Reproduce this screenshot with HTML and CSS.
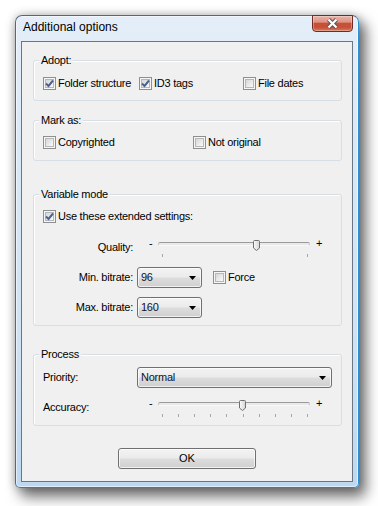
FILE: index.html
```html
<!DOCTYPE html>
<html>
<head>
<meta charset="utf-8">
<link rel="stylesheet" href="styles.css">
</head>
<body>
<div class="window">
  <div class="titlebar">
    <span class="title">Additional options</span>
    <div class="close">
      <svg width="13" height="11" viewBox="0 0 13 11"><path d="M2.5 1.5 L10.5 9.5 M10.5 1.5 L2.5 9.5" stroke="#5e5250" stroke-width="4.2" fill="none"/><path d="M2.5 1.5 L10.5 9.5 M10.5 1.5 L2.5 9.5" stroke="#fff" stroke-width="2.2" fill="none"/></svg>
    </div>
  </div>
  <div class="client">
    <div class="group g-adopt">
      <div class="gtitle">Adopt:</div>
      <div class="row adopt-row">
        <label class="check"><span class="cb on"><svg width="11" height="11" viewBox="0 0 11 11"><path d="M2 5.5 L4.5 8 L9 2.5" stroke="#4b6390" stroke-width="2" fill="none"/></svg></span>Folder structure</label>
        <label class="check"><span class="cb on"><svg width="11" height="11" viewBox="0 0 11 11"><path d="M2 5.5 L4.5 8 L9 2.5" stroke="#4b6390" stroke-width="2" fill="none"/></svg></span>ID3 tags</label>
        <label class="check"><span class="cb"></span>File dates</label>
      </div>
    </div>

    <div class="group g-mark">
      <div class="gtitle">Mark as:</div>
      <div class="row mark-row">
        <label class="check"><span class="cb"></span>Copyrighted</label>
        <label class="check"><span class="cb"></span>Not original</label>
      </div>
    </div>

    <div class="group g-var">
      <div class="gtitle">Variable mode</div>
      <div class="row r-ext">
        <label class="check"><span class="cb on"><svg width="11" height="11" viewBox="0 0 11 11"><path d="M2 5.5 L4.5 8 L9 2.5" stroke="#4b6390" stroke-width="2" fill="none"/></svg></span>Use these extended settings:</label>
      </div>
      <div class="frow r-quality">
        <span class="flabel right top">Quality:</span>
        <div class="slider">
          <div class="srow">
            <span class="pm minus">-</span>
            <div class="track">
              <div class="thumb" style="left:94px"><svg width="7" height="11" viewBox="0 0 7 11"><defs><linearGradient id="tg1" x1="0" y1="0" x2="1" y2="0"><stop offset="0" stop-color="#fafafa"/><stop offset="1" stop-color="#d4d4d4"/></linearGradient></defs><path d="M0.5 1.5 Q0.5 0.5 1.5 0.5 H5.5 Q6.5 0.5 6.5 1.5 V8 L3.5 10.5 L0.5 8 Z" fill="url(#tg1)" stroke="#707070"/></svg></div>
            </div>
            <span class="pm plus">+</span>
          </div>
          <div class="ticks"><i></i><i></i></div>
        </div>
      </div>
      <div class="frow r-min">
        <span class="flabel right">Min. bitrate:</span>
        <div class="select small"><span class="val">96</span><svg width="7" height="4" viewBox="0 0 7 4"><path d="M0 0 H7 L3.5 4 Z" fill="#000"/></svg></div>
        <label class="check force"><span class="cb"></span>Force</label>
      </div>
      <div class="frow r-max">
        <span class="flabel right">Max. bitrate:</span>
        <div class="select small"><span class="val">160</span><svg width="7" height="4" viewBox="0 0 7 4"><path d="M0 0 H7 L3.5 4 Z" fill="#000"/></svg></div>
      </div>
    </div>

    <div class="group g-proc">
      <div class="gtitle">Process</div>
      <div class="frow r-prio">
        <span class="flabel">Priority:</span>
        <div class="select wide"><span class="val">Normal</span><svg width="7" height="4" viewBox="0 0 7 4"><path d="M0 0 H7 L3.5 4 Z" fill="#000"/></svg></div>
      </div>
      <div class="frow r-acc">
        <span class="flabel top">Accuracy:</span>
        <div class="slider">
          <div class="srow">
            <span class="pm minus">-</span>
            <div class="track">
              <div class="thumb" style="left:80px"><svg width="7" height="11" viewBox="0 0 7 11"><defs><linearGradient id="tg2" x1="0" y1="0" x2="1" y2="0"><stop offset="0" stop-color="#fafafa"/><stop offset="1" stop-color="#d4d4d4"/></linearGradient></defs><path d="M0.5 1.5 Q0.5 0.5 1.5 0.5 H5.5 Q6.5 0.5 6.5 1.5 V8 L3.5 10.5 L0.5 8 Z" fill="url(#tg2)" stroke="#707070"/></svg></div>
            </div>
            <span class="pm plus">+</span>
          </div>
          <div class="ticks"><i></i><i></i><i></i><i></i><i></i><i></i><i></i><i></i><i></i><i></i></div>
        </div>
      </div>
    </div>

    <div class="btn">OK</div>
  </div>
</div>
</body>
</html>
```
FILE: styles.css
```css
html, body {
  margin: 0;
  padding: 0;
  background: #ffffff;
}
body {
  font-family: "Liberation Sans", Arial, sans-serif;
  font-size: 11px;
  letter-spacing: -0.25px;
  color: #000;
  height: 506px;
  overflow: hidden;
}
.window {
  margin: 15px 0 0 15px;
  width: 344px;
  height: 473px;
  box-sizing: border-box;
  border: 1px solid #56687c;
  border-right-color: #2e8fd0;
  border-bottom-color: #2e7fc0;
  border-radius: 7px 7px 5px 5px;
  background: linear-gradient(180deg, #e4eef9 0%, #d9e8f6 30%, #cfe2f4 70%, #bdd8f0 100%);
  padding: 0 5px 5px;
  box-shadow: 6px 8px 14px 1px rgba(0,0,0,0.55), 0 0 10px rgba(0,0,0,0.25), inset 0 0 0 1px rgba(255,255,255,0.55);
  display: flex;
  flex-direction: column;
}
.titlebar {
  height: 25px;
  display: flex;
  align-items: flex-start;
}
.title {
  margin: 4px 0 0 2px;
  font-size: 12px;
  line-height: 15px;
  letter-spacing: 0;
  color: #000;
}
.close {
  margin: -1px 0 0 auto;
  width: 41px;
  height: 17px;
  box-sizing: border-box;
  border: 1px solid #6e2d24;
  border-radius: 0 0 4px 4px;
  background: linear-gradient(180deg, #eab3a8 0%, #de9484 40%, #c8503a 50%, #c65036 75%, #d97a60 100%);
  box-shadow: inset 0 0 0 1px rgba(255,255,255,0.3);
  display: flex;
  align-items: center;
  justify-content: center;
}
.client {
  height: 441px;
  box-sizing: border-box;
  border: 1px solid #6a7684;
  background: #f0f0f0;
  display: flex;
  flex-direction: column;
}
.group {
  margin: 0 10px 0 11px;
  border: 1px solid #d5dfe5;
  border-radius: 3px;
  padding: 0 9px;
  display: flex;
  flex-direction: column;
  box-shadow: inset 1px 1px 0 #fff;
}
.gtitle {
  align-self: flex-start;
  margin: -7px 0 0 -4px;
  padding: 0 2px;
  background: #f0f0f0;
  line-height: 13px;
}
.g-adopt { margin-top: 18px; padding-bottom: 10px; }
.g-mark { margin-top: 19px; padding-bottom: 11px; }
.g-var { margin-top: 33px; padding-bottom: 7px; }
.g-proc { margin-top: 28px; padding-bottom: 8px; }

.row {
  display: grid;
  height: 13px;
}
.adopt-row { margin-top: 10px; grid-template-columns: 96px 104px auto; }
.mark-row { margin-top: 9px; grid-template-columns: 150px auto; }
.r-ext { margin-top: 9px; }

.check {
  display: flex;
  align-items: center;
  gap: 2px;
  line-height: 13px;
  white-space: nowrap;
}
.cb {
  width: 13px;
  height: 13px;
  box-sizing: border-box;
  border: 1px solid #8e8f8f;
  background: #f6f6f6;
  position: relative;
  flex: none;
  display: flex;
  align-items: center;
  justify-content: center;
}
.cb::before {
  content: "";
  position: absolute;
  left: 1px; top: 1px; right: 1px; bottom: 1px;
  border: 1px solid #b4b8bd;
  background: linear-gradient(135deg, #d6d6d6 0%, #e8e8e8 50%, #fbfbfb 100%);
}
.cb svg {
  position: relative;
}

.frow {
  display: flex;
  align-items: center;
}
.flabel {
  width: 90px;
  margin-right: 4px;
  line-height: 13px;
  white-space: nowrap;
  flex: none;
}
.flabel.right { text-align: right; }
.flabel.top { align-self: flex-start; margin-top: 1px; }

.r-quality { margin-top: 17px; align-items: flex-start; }
.r-min { margin-top: 10px; }
.r-max { margin-top: 9px; }
.r-prio { margin-top: 6px; }
.r-acc { margin-top: 12px; align-items: flex-start; }

.slider {
  display: flex;
  flex-direction: column;
  margin-left: 12px;
}
.srow {
  display: flex;
  align-items: flex-start;
  height: 11px;
}
.pm {
  line-height: 11px;
  margin-top: -2px;
  letter-spacing: 0;
}
.minus { width: 9px; }
.plus { margin-left: 6px; }
.track {
  position: relative;
  margin-top: 2px;
  width: 152px;
  height: 4px;
  box-sizing: border-box;
  border: 1px solid #c4c4c4;
  border-top-color: #9a9a9a;
  border-bottom-color: #f8f8f8;
  border-radius: 2px;
  background: #e9e9e9;
}
.thumb {
  position: absolute;
  top: -3px;
  width: 7px;
  height: 11px;
}
.thumb svg { display: block; }
.ticks {
  display: flex;
  justify-content: space-between;
  width: 146px;
  margin: 3px 0 0 13px;
  height: 3px;
}
.ticks i {
  width: 1px;
  height: 3px;
  background: #a7a7a7;
}

.select {
  height: 21px;
  box-sizing: border-box;
  border: 1px solid #707070;
  border-radius: 3px;
  background: linear-gradient(180deg, #f3f3f3 0%, #ebebeb 48%, #dddddd 52%, #cfcfcf 100%);
  box-shadow: inset 0 0 0 1px rgba(255,255,255,0.7);
  display: flex;
  align-items: center;
  padding: 0 5px 0 3px;
  flex: none;
}
.select .val { flex: 1; line-height: 13px; color: #10102a; }
.select svg { flex: none; }
.select.small { width: 65px; }
.select.wide { width: 195px; }
.force { margin-left: 11px; }

.btn {
  align-self: center;
  margin-top: 22px;
  width: 138px;
  height: 21px;
  box-sizing: border-box;
  border: 1px solid #707070;
  border-radius: 3px;
  background: linear-gradient(180deg, #f3f3f3 0%, #ebebeb 48%, #dddddd 52%, #cfcfcf 100%);
  box-shadow: inset 0 0 0 1px rgba(255,255,255,0.7);
  display: flex;
  align-items: center;
  justify-content: center;
  line-height: 13px;
  letter-spacing: 0;
}
```
